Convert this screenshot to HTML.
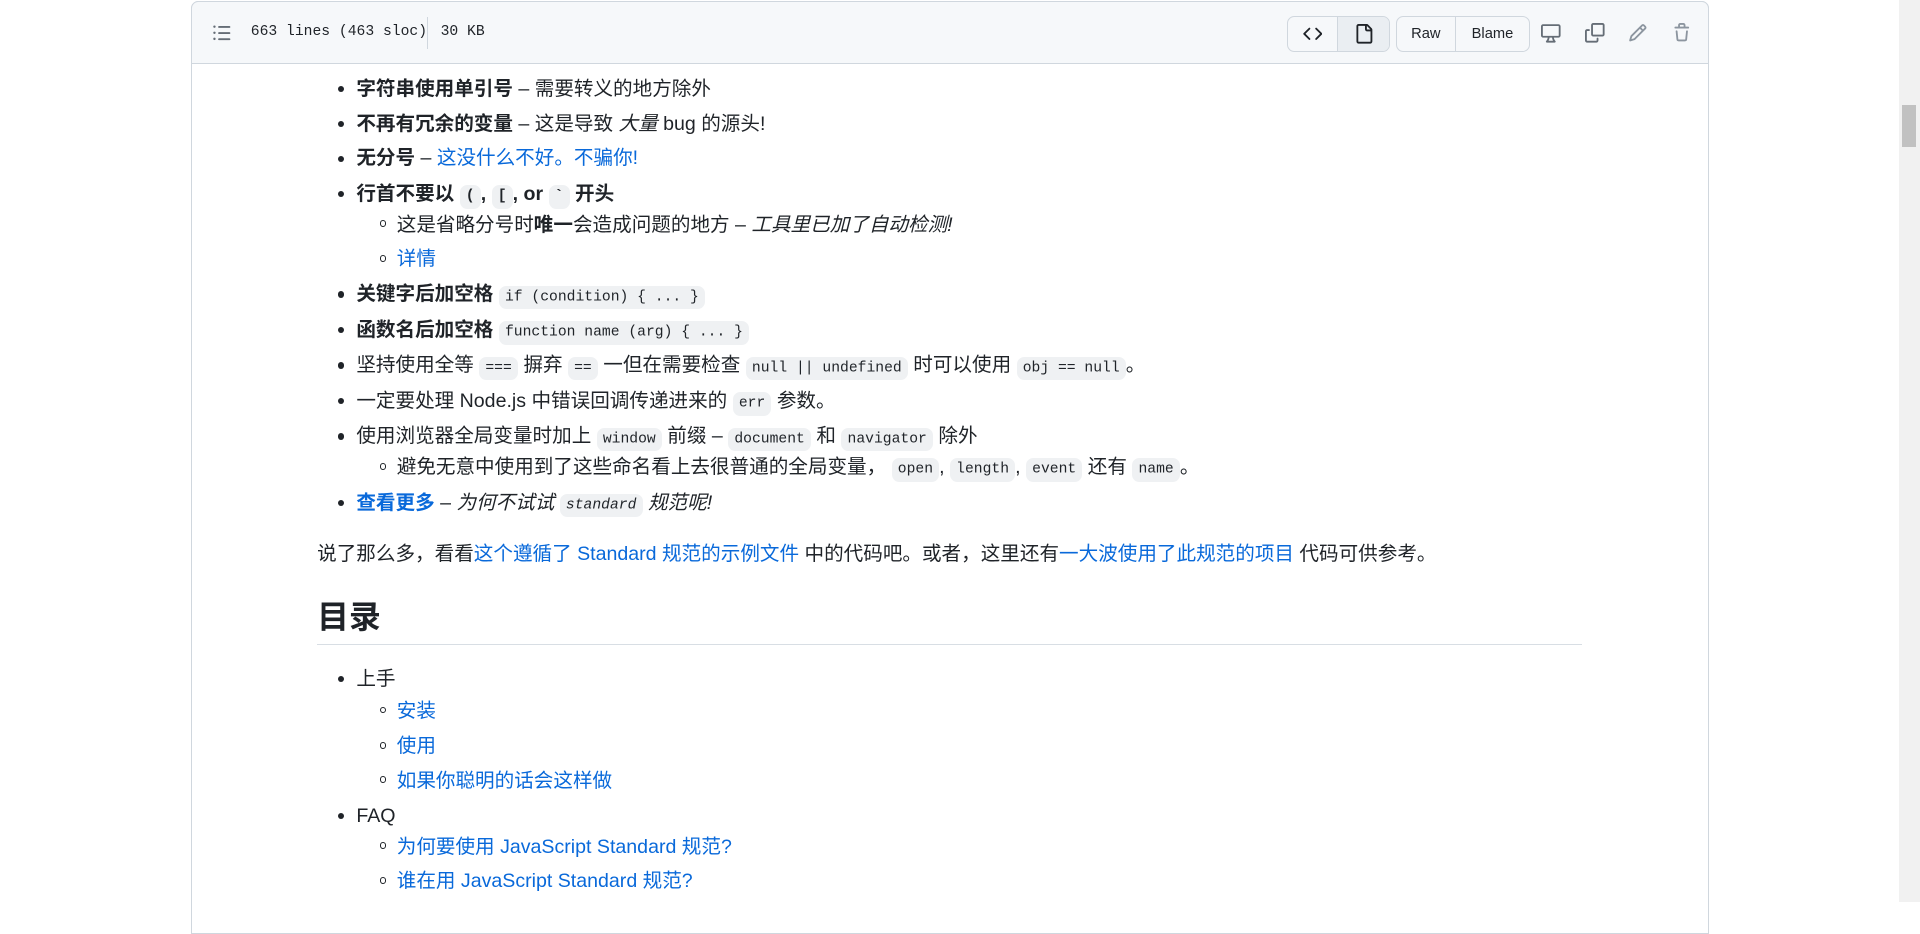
<!DOCTYPE html>
<html><head><meta charset="utf-8">
<style>
html{zoom:1.2245}
body{margin:0;width:1568px;height:737px;overflow:hidden;background:#fff;font-family:"Liberation Sans","Noto Sans CJK SC",sans-serif;font-size:16px;color:#1f2328;position:relative}
.sb{position:absolute;left:1551px;top:0;width:17px;height:737px;background:#f1f1f1}
.sb i{position:absolute;left:2px;top:86px;width:12px;height:34px;background:#c1c1c1}
.box{position:absolute;left:156px;top:1px;width:1238px;height:760px;border:1px solid #d0d7de;border-radius:6px 6px 0 0}
.hd{position:absolute;left:156px;top:1px;width:1238px;height:50px;background:#f6f8fa;border:1px solid #d0d7de;border-radius:6px 6px 0 0;z-index:2}
.mono{font-family:"Liberation Mono",monospace;font-size:12px}
.btn{position:absolute;top:11px;height:28px;border:1px solid #d0d7de;border-radius:6px;background:#f6f8fa;display:flex;overflow:hidden}
.btn>div{display:flex;align-items:center;justify-content:center;font-size:12px;font-weight:normal}
.l{position:absolute;white-space:nowrap;line-height:24px;height:24px}
.dot{position:absolute;width:5px;height:5px;border-radius:50%;background:#1f2328}
.cir{position:absolute;width:4px;height:4px;border-radius:50%;border:1px solid #1f2328}
a{color:#0969da;text-decoration:none}
code{font-family:"Liberation Mono",monospace;font-size:12px;background:rgba(175,184,193,.2);border-radius:6px;padding:3px 5px}
b{font-weight:bold}
</style></head><body>
<div class="sb"><i></i></div>
<div class="box"></div>
<div class="hd">
<svg style="position:absolute;left:16px;top:17px" width="16" height="16" viewBox="0 0 16 16" fill="#656d76"><path d="M5.75 2.5h8.5a.75.75 0 0 1 0 1.5h-8.5a.75.75 0 0 1 0-1.5Zm0 5h8.5a.75.75 0 0 1 0 1.5h-8.5a.75.75 0 0 1 0-1.5Zm0 5h8.5a.75.75 0 0 1 0 1.5h-8.5a.75.75 0 0 1 0-1.5ZM2 14a1 1 0 1 1 0-2 1 1 0 0 1 0 2Zm1-6a1 1 0 1 1-2 0 1 1 0 0 1 2 0ZM2 4a1 1 0 1 1 0-2 1 1 0 0 1 0 2Z"/></svg>
<div class="mono" style="position:absolute;left:48px;top:18px;color:#1f2328">663 lines (463 sloc)</div>
<div style="position:absolute;left:192px;top:12px;width:1px;height:26px;background:#d0d7de"></div>
<div class="mono" style="position:absolute;left:203px;top:18px;color:#1f2328">30 KB</div>
<div class="btn" style="left:894px;width:83px"><div style="width:41px;border-right:1px solid #d0d7de">
<svg width="16" height="16" viewBox="0 0 16 16" fill="#1f2328"><path d="m11.28 3.22 4.25 4.250a.75.75 0 0 1 0 1.06l-4.25 4.25a.749.749 0 0 1-1.06-1.06L13.94 8l-3.72-3.72a.749.749 0 0 1 1.06-1.06Zm-6.56 0a.751.751 0 0 1 1.06 1.06L2.06 8l3.72 3.72a.749.749 0 0 1-1.06 1.06L.47 8.53a.75.75 0 0 1 0-1.06Z"/></svg></div>
<div style="width:42px;background:#eaeef2"><svg width="16" height="16" viewBox="0 0 16 16" fill="#1f2328"><path d="M2 1.750C2 .784 2.784 0 3.75 0h6.586c.464 0 .909.184 1.237.513l2.914 2.914c.329.328.513.773.513 1.237v9.586A1.75 1.75 0 0 1 13.25 16h-9.5A1.75 1.75 0 0 1 2 14.25Zm1.75-.25a.25.25 0 0 0-.25.25v12.5c0 .138.112.25.25.25h9.5a.25.25 0 0 0 .25-.25V6h-2.75A1.75 1.75 0 0 1 9 4.25V1.5Zm6.75.062V4.25c0 .138.112.25.25.25h2.688l-.011-.013-2.914-2.914-.013-.011Z"/></svg></div></div>
<div class="btn" style="left:983px;width:108px"><div style="width:48px;border-right:1px solid #d0d7de">Raw</div><div style="width:60px">Blame</div></div>
<svg style="position:absolute;left:1102px;top:17px" width="16" height="16" viewBox="0 0 16 16" fill="#656d76"><path d="M14.25 1c.966 0 1.75.784 1.75 1.75v7.5A1.75 1.75 0 0 1 14.25 12h-3.727c.099 1.041.52 1.872 1.292 2.757A.752.752 0 0 1 11.25 16h-6.5a.75.75 0 0 1-.565-1.243c.772-.885 1.192-1.716 1.292-2.757H1.75A1.75 1.75 0 0 1 0 10.25v-7.5C0 1.784.784 1 1.75 1ZM1.75 2.5a.25.25 0 0 0-.25.25v7.5c0 .138.112.25.25.25h12.5a.25.25 0 0 0 .25-.25v-7.5a.25.25 0 0 0-.25-.25ZM9.018 12H6.982a5.72 5.72 0 0 1-.765 2.5h3.566a5.720 5.72 0 0 1-.765-2.5Z"/></svg>
<svg style="position:absolute;left:1138px;top:17px" width="16" height="16" viewBox="0 0 16 16" fill="#656d76"><path d="M0 6.75C0 5.784.784 5 1.75 5h1.5a.75.75 0 0 1 0 1.5h-1.5a.25.25 0 0 0-.25.25v7.5c0 .138.112.25.25.25h7.5a.25.25 0 0 0 .25-.25v-1.5a.75.75 0 0 1 1.5 0v1.5A1.75 1.75 0 0 1 9.25 16h-7.5A1.75 1.75 0 0 1 0 14.25Z"/><path d="M5 1.75C5 .784 5.784 0 6.75 0h7.5C15.216 0 16 .784 16 1.75v7.5A1.75 1.75 0 0 1 14.25 11h-7.5A1.75 1.75 0 0 1 5 9.25Zm1.75-.25a.25.25 0 0 0-.25.25v7.5c0 .138.112.25.25.25h7.5a.25.25 0 0 0 .25-.25v-7.5a.25.25 0 0 0-.25-.25Z"/></svg>
<svg style="position:absolute;left:1173px;top:17px" width="16" height="16" viewBox="0 0 16 16" fill="#8c959f"><path d="M11.013 1.427a1.75 1.75 0 0 1 2.474 0l1.086 1.086a1.75 1.75 0 0 1 0 2.474l-8.61 8.61c-.21.21-.47.364-.756.445l-3.251.93a.75.75 0 0 1-.927-.928l.929-3.25c.081-.286.235-.547.445-.758l8.61-8.61Zm.176 4.823L9.75 4.81l-6.286 6.287a.253.253 0 0 0-.064.108l-.558 1.953 1.953-.558a.253.253 0 0 0 .108-.064Zm1.238-3.763a.25.25 0 0 0-.354 0L10.811 3.75l1.439 1.44 1.263-1.263a.25.25 0 0 0 0-.354Z"/></svg>
<svg style="position:absolute;left:1209px;top:17px" width="16" height="16" viewBox="0 0 16 16" fill="#8c959f"><path d="M11 1.75V3h2.25a.75.75 0 0 1 0 1.5H2.75a.75.75 0 0 1 0-1.5H5V1.75C5 .784 5.784 0 6.75 0h2.5C10.216 0 11 .784 11 1.75ZM4.496 6.675l.66 6.6a.25.25 0 0 0 .249.225h5.19a.25.25 0 0 0 .249-.225l.66-6.6a.75.75 0 0 1 1.492.149l-.66 6.6A1.748 1.748 0 0 1 10.595 15h-5.19a1.75 1.75 0 0 1-1.741-1.575l-.66-6.6a.75.75 0 1 1 1.492-.15ZM6.5 1.75V3h3V1.75a.25.25 0 0 0-.25-.25h-2.5a.25.25 0 0 0-.25.25Z"/></svg>
</div>

<div class="dot" style="left:276px;top:70px"></div><div class="l" style="left:291px;top:61px"><b>字符串使用单引号</b> – 需要转义的地方除外</div>
<div class="dot" style="left:276px;top:99px"></div><div class="l" style="left:291px;top:90px"><b>不再有冗余的变量</b> – 这是导致 <i>大量</i> bug 的源头!</div>
<div class="dot" style="left:276px;top:127px"></div><div class="l" style="left:291px;top:118px"><b>无分号</b> – <a>这没什么不好。不骗你!</a></div>
<div class="dot" style="left:276px;top:156px"></div><div class="l" style="left:291px;top:147px"><b>行首不要以 <code>(</code>, <code>[</code>, or <code>`</code> 开头</b></div>
<div class="cir" style="left:310px;top:180px"></div><div class="l" style="left:324px;top:172px">这是省略分号时<b>唯一</b>会造成问题的地方 – <i>工具里已加了自动检测!</i></div>
<div class="cir" style="left:310px;top:208px"></div><div class="l" style="left:324px;top:200px"><a>详情</a></div>
<div class="dot" style="left:276px;top:238px"></div><div class="l" style="left:291px;top:229px"><b>关键字后加空格</b> <code>if (condition) { ... }</code></div>
<div class="dot" style="left:276px;top:267px"></div><div class="l" style="left:291px;top:258px"><b>函数名后加空格</b> <code>function name (arg) { ... }</code></div>
<div class="dot" style="left:276px;top:296px"></div><div class="l" style="left:291px;top:287px">坚持使用全等 <code>===</code> 摒弃 <code>==</code> 一但在需要检查 <code>null || undefined</code> 时可以使用 <code>obj == null</code>。</div>
<div class="dot" style="left:276px;top:325px"></div><div class="l" style="left:291px;top:316px">一定要处理 Node.js 中错误回调传递进来的 <code>err</code> 参数。</div>
<div class="dot" style="left:276px;top:354px"></div><div class="l" style="left:291px;top:345px">使用浏览器全局变量时加上 <code>window</code> 前缀 – <code>document</code> 和 <code>navigator</code> 除外</div>
<div class="cir" style="left:310px;top:378px"></div><div class="l" style="left:324px;top:370px">避免无意中使用到了这些命名看上去很普通的全局变量， <code>open</code>, <code>length</code>, <code>event</code> 还有 <code>name</code>。</div>
<div class="dot" style="left:276px;top:408px"></div><div class="l" style="left:291px;top:399px"><b><a>查看更多</a></b> – <i>为何不试试 <code>standard</code> 规范呢!</i></div>

<div class="l" style="left:259px;top:441px">说了那么多，看看<a>这个遵循了 Standard 规范的示例文件</a> 中的代码吧。或者，这里还有<a>一大波使用了此规范的项目</a> 代码可供参考。</div>
<div class="l" style="left:259px;top:488px;font-size:26px;font-weight:bold;height:32px;line-height:32px">目录</div>
<div style="position:absolute;left:259px;top:526px;width:1033px;height:1px;background:#d8dee4"></div>

<div class="dot" style="left:276px;top:552px"></div><div class="l" style="left:291px;top:543px">上手</div>
<div class="cir" style="left:310px;top:577px"></div><div class="l" style="left:324px;top:569px"><a>安装</a></div>
<div class="cir" style="left:310px;top:606px"></div><div class="l" style="left:324px;top:598px"><a>使用</a></div>
<div class="cir" style="left:310px;top:634px"></div><div class="l" style="left:324px;top:626px"><a>如果你聪明的话会这样做</a></div>
<div class="dot" style="left:276px;top:664px"></div><div class="l" style="left:291px;top:655px">FAQ</div>
<div class="cir" style="left:310px;top:688px"></div><div class="l" style="left:324px;top:680px"><a>为何要使用 JavaScript Standard 规范?</a></div>
<div class="cir" style="left:310px;top:716px"></div><div class="l" style="left:324px;top:708px"><a>谁在用 JavaScript Standard 规范?</a></div>
</body></html>
